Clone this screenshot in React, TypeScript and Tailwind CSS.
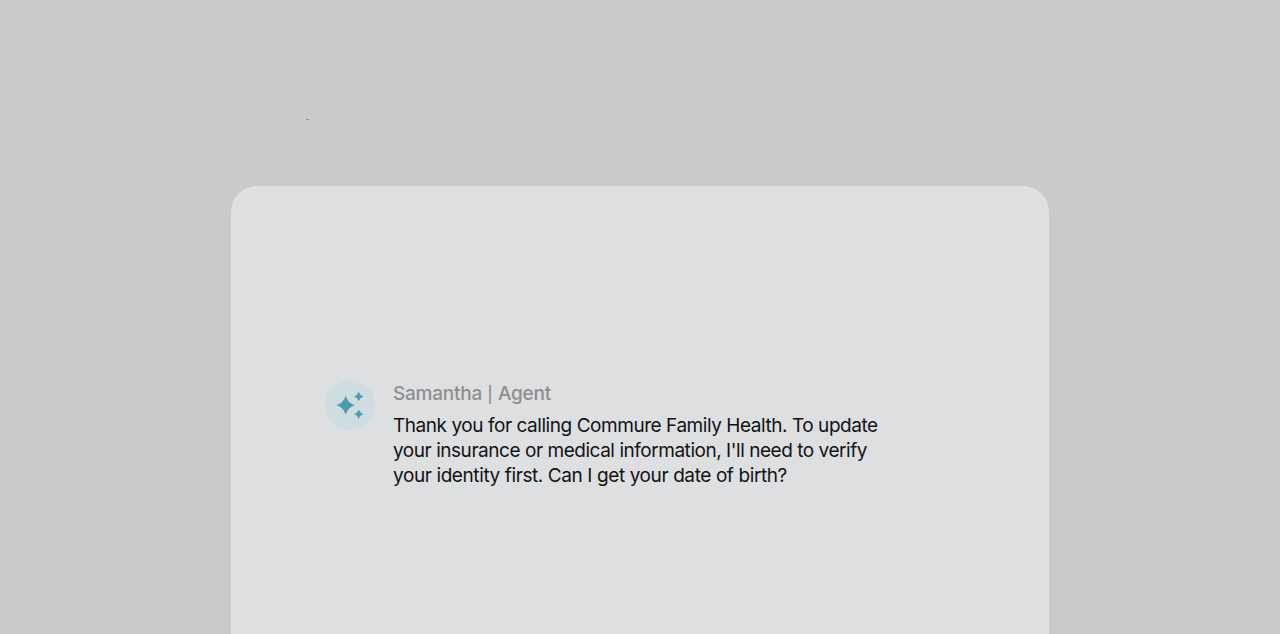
const message = {
  name: "Samantha",
  role: "Agent",
  lines: [
    { text: "Thank you for calling Commure Family Health. To update", className: "tracking-[-0.45px]" },
    { text: "your insurance or medical information, I'll need to verify", className: "tracking-[-0.46px]" },
    { text: "your identity first. Can I get your date of birth?", className: "tracking-[-0.4px]" },
  ],
};

function Sparkles() {
  return (
    <svg viewBox="0 0 50 50" className="size-[50px]" fill="#4b9cae" aria-hidden="true">
      <path d="M20.7 15.8Q22.9 23.1 30 25.2Q22.9 27.3 20.7 34.6Q18.5 27.3 11.4 25.2Q18.5 23.1 20.7 15.8Z" />
      <path d="M33.7 11.5Q34.9 15.4 38.6 16.4Q34.9 17.5 33.7 21.3Q32.5 17.5 28.8 16.4Q32.5 15.4 33.7 11.5Z" />
      <path d="M33.7 29.2Q34.9 33.1 38.6 34.1Q34.9 35.2 33.7 39Q32.5 35.2 28.8 34.1Q32.5 33.1 33.7 29.2Z" />
    </svg>
  );
}

function AgentMessage() {
  return (
    <article className="flex items-start gap-[18px]">
      <div className="size-[50px] shrink-0 rounded-full bg-[#cfdce0]">
        <Sparkles />
      </div>
      <div className="pt-px whitespace-nowrap">
        <h2 className="h-[26px] text-[19px] leading-[26px] font-medium tracking-[-0.24px] text-[#8d8e90]">
          {message.name} <span className="mx-[0.5px] text-[16px] leading-none">|</span> {message.role}
        </h2>
        <p className="mt-1.5 text-[19px] leading-[25px] text-[#111214]">
          {message.lines.map((line) => (
            <span key={line.text} className="block">
              <span className={line.className}>{line.text}</span>
            </span>
          ))}
        </p>
      </div>
    </article>
  );
}

export default function App() {
  return (
    <main className="flex h-screen flex-col items-center overflow-hidden bg-[#cacaca] font-['Inter',sans-serif]">
      <div className="h-[186px] w-[818px] shrink-0 pt-[119px] pl-[75px]">
        <div className="h-px w-[3px] bg-[#969696]" />
      </div>
      <section className="w-[818px] flex-1 rounded-t-[26px] border-x-[3px] border-t-[3px] border-[#e0e0e0] bg-[#dedfe1] pt-[191px] pl-[91px]">
        <AgentMessage />
      </section>
    </main>
  );
}
